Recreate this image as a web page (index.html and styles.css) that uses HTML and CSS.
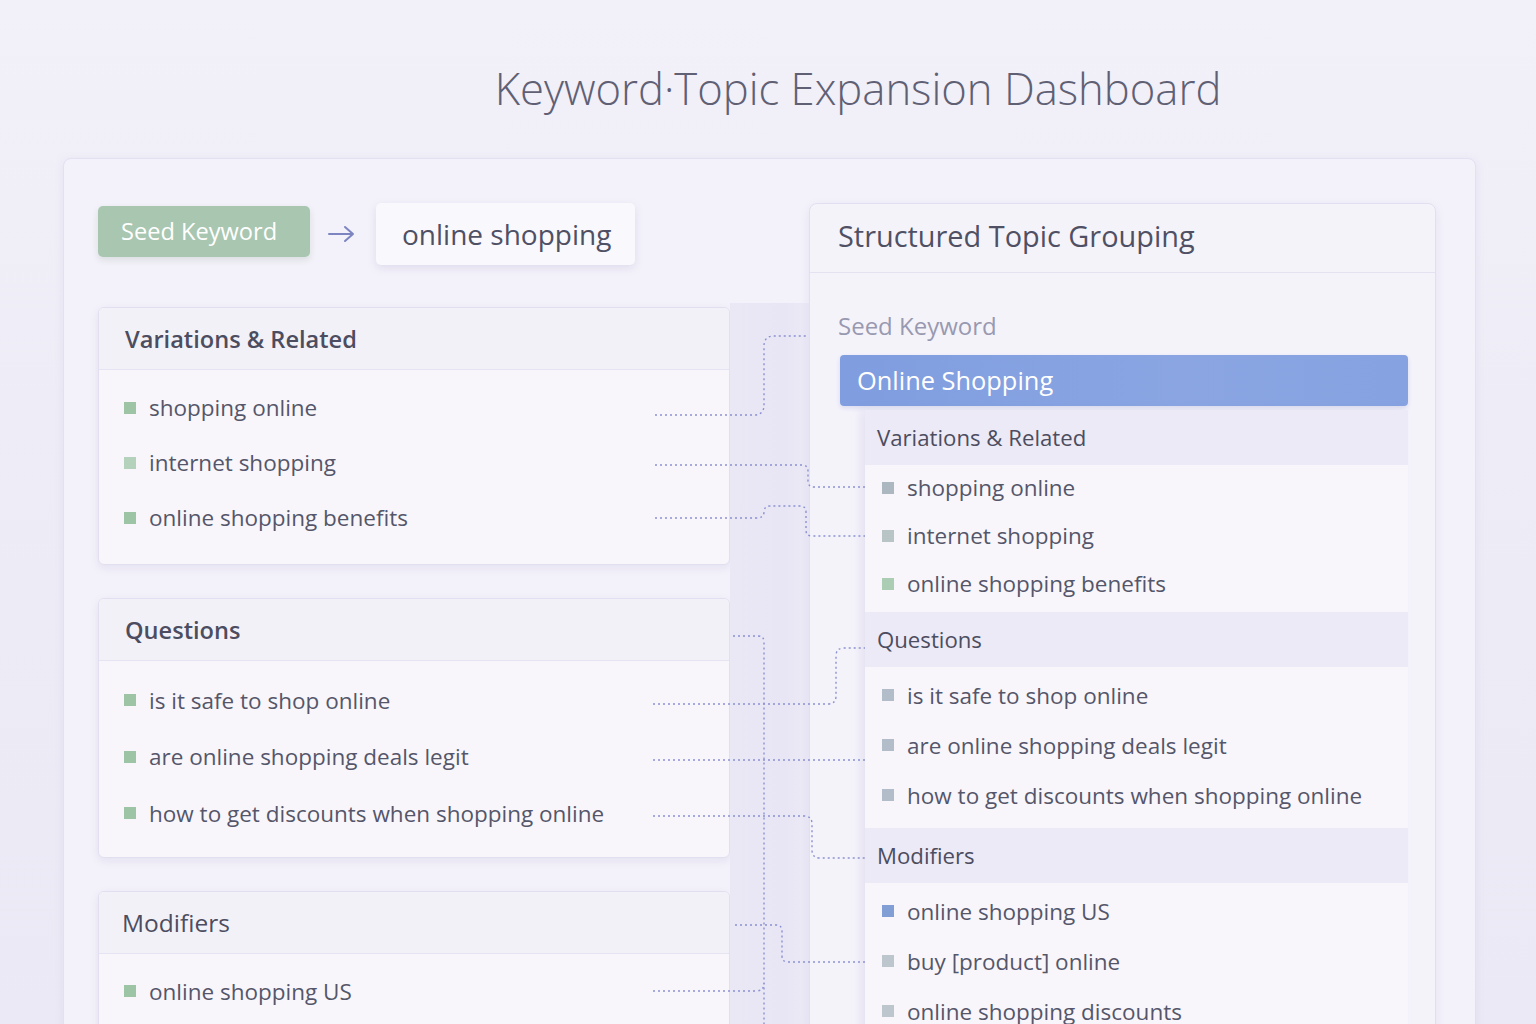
FILE: index.html
```html
<!DOCTYPE html>
<html lang="en">
<head>
<meta charset="utf-8">
<title>Keyword·Topic Expansion Dashboard</title>
<link rel="stylesheet" href="styles.css">
</head>
<body>
<h1 class="title">Keyword·Topic Expansion Dashboard</h1>
<main class="board">
  <section class="left">
    <div class="seed-row">
      <div class="seed-btn">Seed Keyword</div>
      <svg class="arrow" width="30" height="20" viewBox="0 0 30 20"><path d="M2 10 H26 M18 3 L26 10 L18 17" fill="none" stroke="#7c84c2" stroke-width="2" stroke-linecap="round" stroke-linejoin="round"/></svg>
      <div class="seed-value">online shopping</div>
    </div>
    <div class="card">
      <div class="card-head">Variations &amp; Related</div>
      <ul class="card-list">
        <li><span class="sq g1"></span>shopping online</li>
        <li><span class="sq g2"></span>internet shopping</li>
        <li><span class="sq g1"></span>online shopping benefits</li>
      </ul>
    </div>
    <div class="card">
      <div class="card-head">Questions</div>
      <ul class="card-list wide">
        <li><span class="sq g1"></span>is it safe to shop online</li>
        <li><span class="sq g1"></span>are online shopping deals legit</li>
        <li><span class="sq g1"></span>how to get discounts when shopping online</li>
      </ul>
    </div>
    <div class="card">
      <div class="card-head mod">Modifiers</div>
      <ul class="card-list">
        <li><span class="sq g1"></span>online shopping US</li>
        <li><span class="sq g1"></span>buy [product] online</li>
        <li><span class="sq g1"></span>online shopping discounts</li>
      </ul>
    </div>
  </section>
  <div class="band"></div>
  <section class="panel">
    <div class="panel-head">Structured Topic Grouping</div>
    <div class="panel-body">
      <div class="panel-label">Seed Keyword</div>
      <div class="topic-bar">Online Shopping</div>
      <div class="groups">
        <div class="group">
          <div class="group-head first">Variations &amp; Related</div>
          <ul class="group-list tight">
            <li><span class="sq r1"></span>shopping online</li>
            <li><span class="sq r2"></span>internet shopping</li>
            <li><span class="sq r3"></span>online shopping benefits</li>
          </ul>
        </div>
        <div class="group">
          <div class="group-head">Questions</div>
          <ul class="group-list">
            <li><span class="sq r4"></span>is it safe to shop online</li>
            <li><span class="sq r4"></span>are online shopping deals legit</li>
            <li><span class="sq r4"></span>how to get discounts when shopping online</li>
          </ul>
        </div>
        <div class="group">
          <div class="group-head">Modifiers</div>
          <ul class="group-list">
            <li><span class="sq r5"></span>online shopping US</li>
            <li><span class="sq r6"></span>buy [product] online</li>
            <li><span class="sq r6"></span>online shopping discounts</li>
          </ul>
        </div>
      </div>
    </div>
  </section>
</main>
<svg class="links" width="1536" height="1024" viewBox="0 0 1536 1024">
  <g fill="none" stroke="#8a91d2" stroke-width="1.4" stroke-dasharray="2 3">
    <path d="M655 415 H754 Q764 415 764 405 V346 Q764 336 774 336 H808"/>
    <path d="M655 465 H802 Q808 465 808 471 V481 Q808 487 814 487 H865"/>
    <path d="M655 518 H756 Q764 518 764 512 Q764 506 770 506 H800 Q806 506 806 512 V530 Q806 536 812 536 H865"/>
    <path d="M733 636 H758 Q764 636 764 642 V1024"/>
    <path d="M653 704 H828 Q836 704 836 696 V656 Q836 648 844 648 H865"/>
    <path d="M653 760 H865"/>
    <path d="M653 816 H804 Q812 816 812 824 V850 Q812 858 820 858 H865"/>
    <path d="M735 925 H776 Q782 925 782 931 V956 Q782 962 788 962 H865"/>
    <path d="M653 991 H756 Q764 991 764 983"/>
  </g>
</svg>
</body>
</html>
```

FILE: styles.css
```css
* { box-sizing: border-box; }
html, body { margin: 0; padding: 0; }
body {
  width: 1536px;
  height: 1024px;
  overflow: hidden;
  position: relative;
  font-family: "Open Sans", "Noto Sans", sans-serif;
  color: #55566a;
  background: linear-gradient(180deg, #f2f0f8 0%, #eeecf6 40%, #ebe9f5 100%);
  padding-top: 62px;
}
ul { list-style: none; margin: 0; padding: 0; }

.title {
  margin: 0 0 44px 0;
  height: 52px;
  line-height: 52px;
  font-size: 43.6px;
  font-weight: 300;
  color: #5f6074;
  text-align: center;
  padding-left: 180px;
}

.board {
  margin-left: 63px;
  width: 1413px;
  height: 900px;
  background: #f3f1f9;
  border: 1px solid #e3e1f1;
  border-radius: 8px;
  box-shadow: 0 2px 10px rgba(150, 145, 200, 0.12);
  display: flex;
  padding: 44px 39px 0 34px;
}

.left { width: 632px; display: flex; flex-direction: column; }
.band {
  width: 79px;
  margin-top: 100px;
  background: linear-gradient(90deg, #eae8f5, #e8e6f4 70%, #eceaf6);
}

.seed-row { display: flex; align-items: center; height: 62px; margin-bottom: 42px; }
.seed-btn {
  width: 212px;
  height: 51px;
  margin-top: -5px;
  background: #a9c6b0;
  border-radius: 5px;
  color: #ffffff;
  font-size: 23.6px;
  line-height: 51px;
  padding-left: 23px;
  box-shadow: 0 3px 6px rgba(120, 150, 130, 0.2);
}
.arrow { margin: 0 0 0 17px; }
.seed-value {
  margin-left: 19px;
  width: 259px;
  height: 62px;
  background: #f9f8fc;
  border-radius: 5px;
  box-shadow: 0 3px 8px rgba(140, 135, 190, 0.18);
  font-size: 28px;
  line-height: 62px;
  padding-left: 26px;
  color: #4f5064;
}

.card {
  background: #f8f6fb;
  border: 1px solid #e2e0f0;
  border-radius: 6px;
  box-shadow: 0 3px 8px rgba(140, 135, 195, 0.14);
  margin-bottom: 33px;
  overflow: hidden;
  flex-shrink: 0;
}
.card-head {
  height: 62px;
  line-height: 62px;
  padding-left: 26px;
  font-size: 23.6px;
  font-weight: 600;
  color: #4c4d60;
  background: #f3f1f8;
  border-bottom: 1px solid #e6e4f2;
}
.card-head.mod { padding-left: 23px; font-weight: 500; font-size: 24.5px; }
.card-list { padding: 10px 0 19px 25px; }
.card-list.wide { padding: 11px 0 15px 25px; }
.card-list li {
  height: 55px;
  display: flex;
  align-items: center;
  font-size: 22.5px;
  color: #55566a;
}
.card-list.wide li { height: 56.5px; }
.sq { width: 12px; height: 12px; flex-shrink: 0; margin-right: 13px; }
.g1 { background: #9ec4a6; }
.g2 { background: #b3d1bb; }

.panel {
  width: 627px;
  background: #f5f3fa;
  border: 1px solid #e2e0f0;
  border-radius: 8px;
  box-shadow: 0 3px 10px rgba(140, 135, 195, 0.12);
  align-self: flex-start;
  height: 860px;
}
.panel-head {
  height: 69px;
  line-height: 64px;
  padding-left: 28px;
  font-size: 28.9px;
  color: #4f5064;
  border-bottom: 1px solid #e4e2f2;
}
.panel-body { padding: 37px 27px 0 30px; }
.panel-label { font-size: 24px; line-height: 32px; color: #9899b0; margin-left: -2px; }
.topic-bar {
  margin-top: 13px;
  height: 51px;
  line-height: 51px;
  padding-left: 17px;
  background: linear-gradient(90deg, #7f9ddf, #8aa5e2 60%, #86a2e0);
  border-radius: 4px;
  color: #ffffff;
  font-size: 25.4px;
  box-shadow: 0 2px 5px rgba(100, 120, 200, 0.2);
}
.groups {
  margin: 4px 0 0 25px;
  box-shadow: -5px 0 9px rgba(140, 135, 200, 0.14);
}
.group-head {
  height: 55px;
  line-height: 55px;
  padding-left: 12px;
  font-size: 22.2px;
  color: #4c4d60;
  background: #eceaf6;
}
.group-head.first { line-height: 56px; }
.group-list { background: #f8f6fb; padding: 3px 0 8px 17px; }
.group-list.tight { padding: 0 0 3px 17px; }
.group-list li {
  height: 50px;
  display: flex;
  align-items: center;
  font-size: 22.5px;
  color: #55566a;
}
.group-list.tight li { height: 48px; padding-bottom: 3px; }
.r1 { background: #adb7bf; }
.r2 { background: #b9c4c6; }
.r3 { background: #aacdb3; }
.r4 { background: #b3bdc9; }
.r5 { background: #819fd5; }
.r6 { background: #bdc5cd; }

.links { position: absolute; left: 0; top: 0; pointer-events: none; }
```
